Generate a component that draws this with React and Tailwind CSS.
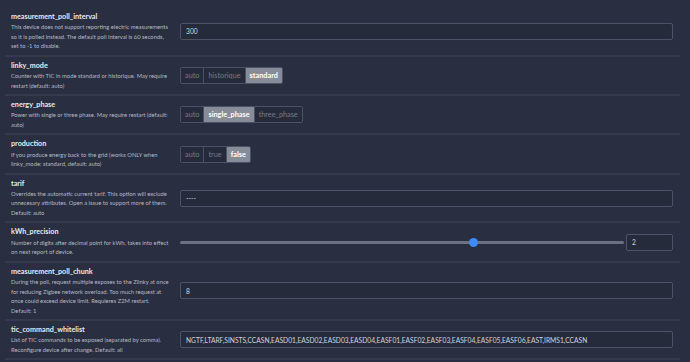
import React, { useState } from "react";

const rows = [
    {
        name: "measurement_poll_interval",
        desc: "This device does not support reporting electric measurements so it is polled instead. The default poll interval is 60 seconds, set to -1 to disable.",
        type: "text",
        value: "300",
    },
    {
        name: "linky_mode",
        desc: "Counter with TIC in mode standard or historique. May require restart (default: auto)",
        type: "enum",
        options: ["auto", "historique", "standard"],
        value: "standard",
    },
    {
        name: "energy_phase",
        desc: "Power with single or three phase. May require restart (default: auto)",
        type: "enum",
        options: ["auto", "single_phase", "three_phase"],
        value: "single_phase",
    },
    {
        name: "production",
        desc: "If you produce energy back to the grid (works ONLY when linky_mode: standard, default: auto)",
        type: "enum",
        options: ["auto", "true", "false"],
        value: "false",
    },
    {
        name: "tarif",
        desc: "Overrides the automatic current tarif. This option will exclude unnecesary attributes. Open a issue to support more of them. Default: auto",
        type: "text",
        value: "----",
    },
    {
        name: "kWh_precision",
        desc: "Number of digits after decimal point for kWh, takes into effect on next report of device.",
        type: "range",
        value: "2",
    },
    {
        name: "measurement_poll_chunk",
        desc: "During the poll, request multiple exposes to the Zlinky at once for reducing Zigbee network overload. Too much request at once could exceed device limit. Requieres Z2M restart. Default: 1",
        type: "text",
        value: "8",
    },
    {
        name: "tic_command_whitelist",
        desc: "List of TIC commands to be exposed (separated by comma). Reconfigure device after change. Default: all",
        type: "text",
        value: "NGTF,LTARF,SINSTS,CCASN,EASD01,EASD02,EASD03,EASD04,EASF01,EASF02,EASF03,EASF04,EASF05,EASF06,EAST,IRMS1,CCASN",
    },
];

const EnumGroup = ({ options, value, onChange }) => (
    <div className="flex h-[17px] border border-[#4b5166] rounded-[2px] overflow-hidden">
        {options.map((opt, i) => (
            <button
                key={opt}
                type="button"
                onClick={() => onChange(opt)}
                className={
                    "px-[4px] text-[7.3px] leading-[15px] " +
                    (i > 0 ? "border-l border-[#4b5166] " : "") +
                    (opt === value ? "bg-[#878c98] text-white font-bold" : "bg-[#262b3c] text-[#747a8b]")
                }
            >
                {opt}
            </button>
        ))}
    </div>
);

const TextInput = ({ value, onChange, className }) => (
    <input
        type="text"
        value={value}
        onChange={(e) => onChange(e.target.value)}
        className={"h-[17px] bg-[#262b3c] border border-[#4d5368] rounded-[2px] px-[5px] text-[6.7px] text-[#d2d5dc] focus:outline-none " + className}
    />
);

const Slider = () => (
    <div className="flex-1 relative h-[9px] flex items-center">
        <div className="w-full h-[3px] rounded-full bg-[#6c7182]"></div>
        <div className="absolute left-[66%] top-0 w-[9px] h-[9px] -ml-[4px] rounded-full bg-[#3d8bfd]"></div>
    </div>
);

const App = () => {
    const [values, setValues] = useState(
        Object.fromEntries(rows.map((r) => [r.name, r.value]))
    );

    const update = (name, v) => setValues({ ...values, [name]: v });

    return (
        <div
            className="w-[690px] h-[362px] overflow-hidden bg-[#292e40] pt-[8px] pl-[5px] pr-[10px]"
            style={{ fontFamily: 'Lato, "Open Sans", sans-serif' }}
        >
            {rows.map((row) => (
                <div key={row.name} className="flex items-center border-b-2 border-[#353a4d] pl-[6px] pr-[7px] py-[4px]">
                    <div className="w-[166px] shrink-0 pr-[6px]">
                        <div className="text-[7.2px] leading-[10.3px] font-bold text-[#e8eaee]">{row.name}</div>
                        <div className="text-[5.8px] leading-[9.5px] text-[#b6bac4]">{row.desc}</div>
                    </div>
                    <div className="flex-1 flex items-center pl-[3px]">
                        {row.type === "text" && (
                            <TextInput value={values[row.name]} onChange={(v) => update(row.name, v)} className="w-full" />
                        )}
                        {row.type === "enum" && (
                            <EnumGroup options={row.options} value={values[row.name]} onChange={(v) => update(row.name, v)} />
                        )}
                        {row.type === "range" && (
                            <div className="flex-1 flex items-center gap-[2px]">
                                <Slider />
                                <TextInput value={values[row.name]} onChange={(v) => update(row.name, v)} className="w-[47px]" />
                            </div>
                        )}
                    </div>
                </div>
            ))}
        </div>
    );
};

export default App;
